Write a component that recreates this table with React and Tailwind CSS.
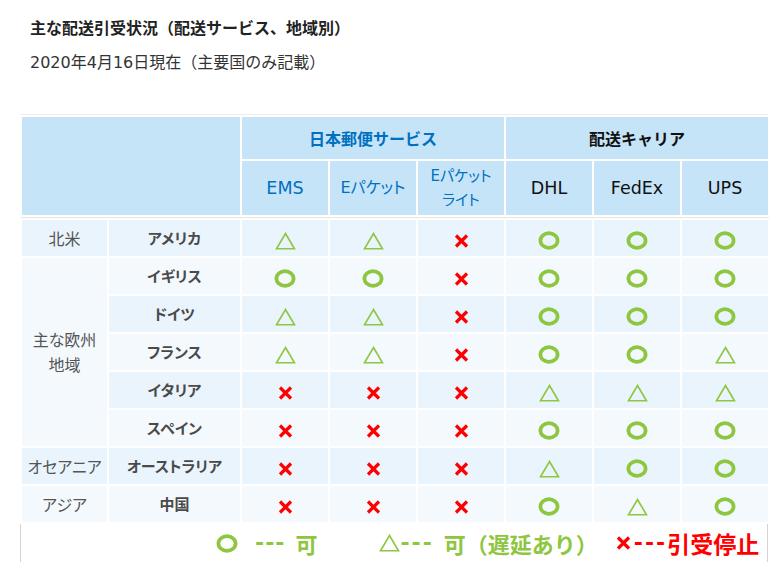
import React from 'react';

const Ring = ({ className = '' }) => (
  <svg width="22" height="19" viewBox="0 0 22 19" className={`inline-block ${className}`}>
    <ellipse cx="11" cy="9.5" rx="8.6" ry="7.3" fill="none" stroke="#8dc63f" strokeWidth="3.7" />
  </svg>
);

const Tri = ({ className = '' }) => (
  <svg width="21" height="18" viewBox="0 0 21 18" className={`inline-block ${className}`}>
    <polygon points="10.5,1.5 19.5,16.8 1.5,16.8" fill="none" stroke="#8dc63f" strokeWidth="1.6" />
  </svg>
);

const Cross = ({ className = '' }) => (
  <svg width="15" height="14" viewBox="0 0 15 14" className={`inline-block ${className}`}>
    <path d="M2 1.5 L13 12.5 M13 1.5 L2 12.5" stroke="#ff0000" strokeWidth="3.2" strokeLinecap="butt" />
  </svg>
);

const marks = { o: Ring, t: Tri, x: Cross };

const rows = [
  { name: 'アメリカ', cells: 'ttxooo', region: '北米', span: 1 },
  { name: 'イギリス', cells: 'ooxooo', region: '主な欧州\n地域', span: 5 },
  { name: 'ドイツ', cells: 'ttxooo' },
  { name: 'フランス', cells: 'ttxoot' },
  { name: 'イタリア', cells: 'xxxttt' },
  { name: 'スペイン', cells: 'xxxooo' },
  { name: 'オーストラリア', cells: 'xxxtoo', region: 'オセアニア', span: 1 },
  { name: '中国', cells: 'xxxoto', region: 'アジア', span: 1 },
];

export default function App() {
  return (
    <div className="w-[783px] h-[571px] bg-white text-[#333] font-['Noto_Sans_CJK_JP',sans-serif]">
      <div className="pl-[30px] pt-[16px]">
        <h1 className="text-[16px] font-bold leading-[22px] text-[#222]">
          主な配送引受状況（配送サービス、地域別）
        </h1>
        <p className="mt-[14px] text-[16px] leading-[22px] text-[#333] font-['DejaVu_Sans','Noto_Sans_CJK_JP',sans-serif]">
          2020年4月16日現在（主要国のみ記載）
        </p>
      </div>

      <div className="ml-[20px] mt-[40px] w-[748px] border-t border-[#eeeeee]">
        <table className="w-[748px] table-fixed border-collapse">
          <colgroup>
            <col className="w-[87px]" />
            <col className="w-[133px]" />
            <col className="w-[88px]" />
            <col className="w-[88px]" />
            <col className="w-[88px]" />
            <col className="w-[88px]" />
            <col className="w-[88px]" />
            <col className="w-[88px]" />
          </colgroup>
          <thead>
            <tr className="h-[44px] bg-[#c6e4f8]">
              <th colSpan={2} rowSpan={2} className="border-2 border-white" />
              <th colSpan={3} className="border-2 border-white text-[16px] font-bold text-[#0070c0]">
                日本郵便サービス
              </th>
              <th colSpan={3} className="border-2 border-white text-[16px] font-bold text-[#111]">
                配送キャリア
              </th>
            </tr>
            <tr className="h-[56px] bg-[#c6e4f8] text-[17.5px] font-normal font-['DejaVu_Sans','Noto_Sans_CJK_JP',sans-serif]">
              <th className="border-2 border-white font-normal text-[#0070c0]">EMS</th>
              <th className="border-2 border-white font-normal text-[16px] text-[#0070c0] [font-feature-settings:'palt']">Eパケット</th>
              <th className="border-2 border-white font-normal text-[#0070c0] text-[15px] leading-[24px] [font-feature-settings:'palt']">
                Eパケット
                <br />
                ライト
              </th>
              <th className="border-2 border-white font-normal text-[#111]">DHL</th>
              <th className="border-2 border-white font-normal text-[#111]">FedEx</th>
              <th className="border-2 border-white font-normal text-[#111]">UPS</th>
            </tr>
            <tr className="h-px">
              <td colSpan={8} className="p-0 bg-white">
                <div className="h-px bg-[#e6e6e6]" />
              </td>
            </tr>
          </thead>
          <tbody>
            {rows.map((r, i) => {
              const bg = i % 2 === 0 ? 'bg-[#eaf4fc]' : 'bg-[#f4f9fe]';
              return (
                <tr key={r.name} className={`h-[38px] ${bg}`}>
                  {r.region && (
                    <td
                      rowSpan={r.span}
                      className="border-2 border-white text-center text-[16px] leading-[25px] text-[#555] whitespace-pre-line [font-feature-settings:'palt']"
                    >
                      {r.region}
                    </td>
                  )}
                  <td className="border-2 border-white text-center text-[15px] font-bold text-[#4a4a4a] [font-feature-settings:'palt']">
                    {r.name}
                  </td>
                  {r.cells.split('').map((c, j) => {
                    const Mark = marks[c];
                    return (
                      <td key={j} className="border-2 border-white text-center align-middle">
                        <Mark className="align-middle" />
                      </td>
                    );
                  })}
                </tr>
              );
            })}
          </tbody>
        </table>
        <div className="h-[38px] border-x border-[#d4d4d4] flex items-center text-[22px] font-bold leading-none">
          <Ring className="ml-[195px]" />
          <span className="ml-[17px] text-[#8dc63f] tracking-[1px] font-['DejaVu_Sans','Noto_Sans_CJK_JP',sans-serif]">---</span>
          <span className="ml-[10px] text-[#8dc63f]">可</span>
          <Tri className="ml-[62px]" />
          <span className="text-[#8dc63f] tracking-[2px] font-['DejaVu_Sans','Noto_Sans_CJK_JP',sans-serif]">---</span>
          <span className="ml-[10px] text-[#8dc63f]">可（遅延あり）</span>
          <Cross className="ml-[18px]" />
          <span className="ml-[3px] text-[#ff0000] tracking-[2px] font-['DejaVu_Sans','Noto_Sans_CJK_JP',sans-serif]">---</span>
          <span className="text-[23px] text-[#ff0000]">引受停止</span>
        </div>
      </div>
    </div>
  );
}
